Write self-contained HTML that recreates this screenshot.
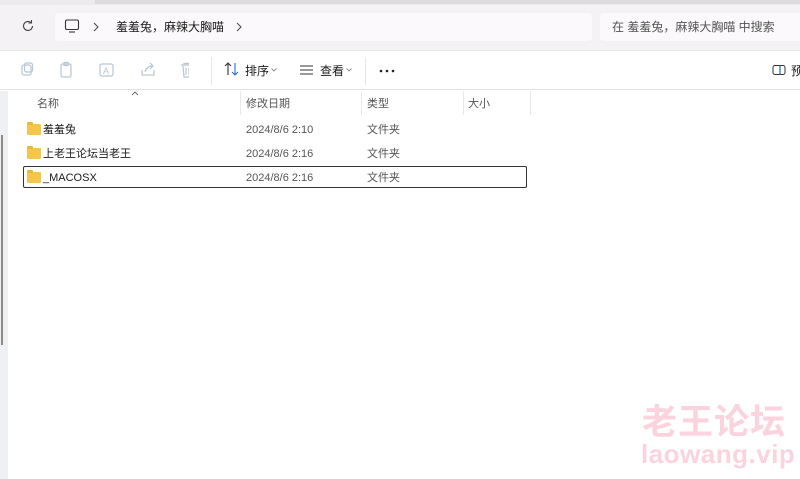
<!DOCTYPE html>
<html><head><meta charset="utf-8"><style>
*{margin:0;padding:0;box-sizing:border-box}
body{width:800px;height:479px;overflow:hidden;background:#fff;font-family:"Liberation Sans","Noto Sans CJK SC",sans-serif;position:relative;color:#1a1a1a}
.abs{position:absolute;line-height:14px}
.hdr{left:0;top:0;width:800px;height:50px;background:#f4f2f4}
.topband{left:0;top:0;width:800px;height:5px;background:#eceaec}
.topband2{left:95px;top:0;width:705px;height:4px;background:#dcdadc}
.addr{left:55px;top:13px;width:537px;height:28px;background:#fbf9fb;border-radius:4px}
.search{left:600px;top:13px;width:200px;height:28px;background:#fbf9fb;border-radius:4px 0 0 4px}
.t12{font-size:12px}
.gray{color:#555}
.tb{left:0;top:50px;width:800px;height:40px;background:#fff;border-top:1px solid #e6e4e6;border-bottom:1px solid #e2e2e2}
.lstrip{left:0;top:91px;width:8px;height:388px;background:#eff0f2}
.sbar{left:1px;top:135px;width:2px;height:210px;background:#8a8a8a}
.colsep{top:91px;width:1px;height:24px;background:#e8e8e8}
.row{left:23px;width:504px;height:22px}
.fold{width:14px;height:11px;background:#f4c74c;border-radius:1px;left:27px}
.fold:before{content:"";position:absolute;left:0;top:-2px;width:6px;height:3px;background:#e9b73a;border-radius:1px 1px 0 0}
.ico{stroke:#b8c6d4;fill:none;stroke-width:1.2}
.f11{font-size:11px}
</style></head><body>
<div class="abs hdr"></div>
<div class="abs topband"></div>
<div class="abs topband2"></div>
<div class="abs addr"></div>
<div class="abs search"></div>
<svg class="abs" style="left:21px;top:19px" width="14" height="14" viewBox="0 0 14 14"><path d="M11.5 7A4.5 4.5 0 1 1 10 3.6M10.5 1v3h-3" stroke="#444" stroke-width="1.1" fill="none"/></svg>
<svg class="abs" style="left:64px;top:18px" width="16" height="16" viewBox="0 0 16 16"><rect x="1.5" y="2" width="13" height="9.5" rx="1.5" stroke="#333" fill="none" stroke-width="1.1"/><path d="M5 14h6" stroke="#333" stroke-width="1.1"/></svg>
<svg class="abs" style="left:93px;top:22px" width="6" height="10" viewBox="0 0 6 10"><path d="M1 1l4 4-4 4" stroke="#444" fill="none" stroke-width="1"/></svg>
<div class="abs t12" style="left:116px;top:20px">羞羞兔，麻辣大胸喵</div>
<svg class="abs" style="left:236px;top:22px" width="6" height="10" viewBox="0 0 6 10"><path d="M1 1l4 4-4 4" stroke="#444" fill="none" stroke-width="1"/></svg>
<div class="abs t12 gray" style="left:612px;top:20px">在 羞羞兔，麻辣大胸喵 中搜索</div>
<div class="abs tb"></div>
<svg class="abs" style="left:19px;top:61px" width="170" height="18" viewBox="0 0 170 18">
<rect class="ico" x="3" y="4" width="9" height="10" rx="2"/><rect class="ico" x="5.5" y="2" width="8" height="9" rx="2"/>
<rect class="ico" x="42" y="3" width="10" height="13" rx="1.5"/><rect class="ico" x="45" y="1.5" width="4" height="3"/>
<rect class="ico" x="81" y="3" width="13" height="12" rx="2"/><text x="84" y="13" font-size="9" fill="#b8c6d4" font-family="Liberation Sans">A</text>
<path class="ico" d="M123 9v5h12v-5M126 11c1-4 4-6 8-6M131 2l3 3-3 3"/>
<path class="ico" d="M162 4h12M165 4V2.5h6V4M164 5l1 11h8l1-11M167 7v7M170 7v7"/>
</svg>
<div class="abs" style="left:211px;top:57px;width:1px;height:28px;background:#e6e6e6"></div>
<svg class="abs" style="left:224px;top:62px" width="16" height="14" viewBox="0 0 16 14"><path d="M4 13V1M1 4l3-3 3 3" stroke="#333" stroke-width="1.1" fill="none"/><path d="M11 1v12M8 10l3 3 3-3" stroke="#2b6fd0" stroke-width="1.1" fill="none"/></svg>
<div class="abs t12" style="left:245px;top:64px">排序</div>
<svg class="abs" style="left:271px;top:68px" width="6" height="4" viewBox="0 0 6 4"><path d="M0.5 0.5l2.5 2.5 2.5-2.5" stroke="#888" fill="none" stroke-width="0.9"/></svg>
<svg class="abs" style="left:299px;top:64px" width="16" height="12" viewBox="0 0 16 12"><path d="M1 2h13M1 6h13M1 10h13" stroke="#333" stroke-width="1"/></svg>
<div class="abs t12" style="left:320px;top:64px">查看</div>
<svg class="abs" style="left:346px;top:68px" width="6" height="4" viewBox="0 0 6 4"><path d="M0.5 0.5l2.5 2.5 2.5-2.5" stroke="#888" fill="none" stroke-width="0.9"/></svg>
<div class="abs" style="left:365px;top:57px;width:1px;height:28px;background:#e6e6e6"></div>
<svg class="abs" style="left:379px;top:69px" width="16" height="4" viewBox="0 0 16 4"><circle cx="2" cy="2" r="1.3" fill="#222"/><circle cx="8" cy="2" r="1.3" fill="#222"/><circle cx="14" cy="2" r="1.3" fill="#222"/></svg>
<svg class="abs" style="left:772px;top:64px" width="14" height="12" viewBox="0 0 14 12"><rect x="1" y="1.5" width="12" height="9" rx="2" stroke="#333" fill="none"/><path d="M8 1.5v9" stroke="#2b6fd0" stroke-width="1.3"/></svg>
<div class="abs t12" style="left:791px;top:64px">预</div>
<div class="abs lstrip"></div>
<div class="abs sbar"></div>
<svg class="abs" style="left:131px;top:91px" width="8" height="5" viewBox="0 0 8 5"><path d="M1 4l3-3 3 3" stroke="#666" fill="none" stroke-width="0.9"/></svg>
<div class="abs gray f11" style="left:37px;top:97px">名称</div>
<div class="abs colsep" style="left:240px"></div>
<div class="abs gray f11" style="left:246px;top:97px">修改日期</div>
<div class="abs colsep" style="left:361px"></div>
<div class="abs gray f11" style="left:367px;top:97px">类型</div>
<div class="abs colsep" style="left:463px"></div>
<div class="abs gray f11" style="left:468px;top:97px">大小</div>
<div class="abs colsep" style="left:530px"></div>

<div class="abs fold" style="top:124px"></div>
<div class="abs f11" style="left:43px;top:123px">羞羞兔</div>
<div class="abs gray f11" style="left:246px;top:123px">2024/8/6 2:10</div>
<div class="abs gray f11" style="left:367px;top:123px">文件夹</div>

<div class="abs fold" style="top:148px"></div>
<div class="abs f11" style="left:43px;top:147px">上老王论坛当老王</div>
<div class="abs gray f11" style="left:246px;top:147px">2024/8/6 2:16</div>
<div class="abs gray f11" style="left:367px;top:147px">文件夹</div>

<div class="abs row" style="top:166px;border:1px solid #333;border-radius:2px"></div>
<div class="abs fold" style="top:172px"></div>
<div class="abs f11" style="left:43px;top:171px">_MACOSX</div>
<div class="abs gray f11" style="left:246px;top:171px">2024/8/6 2:16</div>
<div class="abs gray f11" style="left:367px;top:171px">文件夹</div>

<div class="abs" style="left:642px;top:402px;font-size:35px;color:#fbd3de;font-family:'Noto Sans CJK SC',sans-serif;font-weight:bold;line-height:1;letter-spacing:1px">老王论坛</div>
<div class="abs" style="left:641px;top:441px;font-size:26px;color:#fbd3de;font-weight:bold;line-height:1;letter-spacing:0.5px">laowang.vip</div>
</body></html>
